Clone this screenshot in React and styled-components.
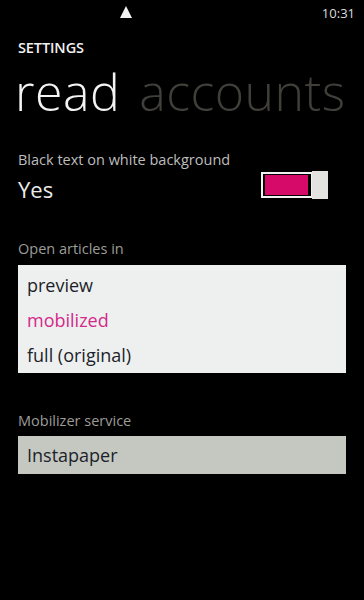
import React from 'react';
import styled, { createGlobalStyle } from 'styled-components';

const Global = createGlobalStyle`
  html, body {
    margin: 0;
    padding: 0;
    background: #000;
  }
  body {
    font-family: "Open Sans", "Noto Sans", sans-serif;
    color: #ececec;
  }
`;

const Phone = styled.div`
  width: 364px;
  height: 600px;
  background: #000;
  overflow: hidden;
  display: flex;
  flex-direction: column;
`;

const StatusBar = styled.div`
  height: 24px;
  display: flex;
  align-items: center;
  justify-content: space-between;
  padding: 0 9px 0 120px;
`;

const Triangle = styled.div`
  width: 0;
  height: 0;
  border-left: 6px solid transparent;
  border-right: 6px solid transparent;
  border-bottom: 12px solid #f2f2f2;
`;

const Clock = styled.span`
  font-size: 13px;
  color: #dcdcdc;
  margin-top: 2px;
`;

const AppTitle = styled.div`
  margin: 13.5px 0 0 18px;
  font-size: 14.5px;
  line-height: 20px;
  font-weight: 600;
  letter-spacing: -0.1px;
  color: #f0f0f0;
`;

const Pivot = styled.div`
  display: flex;
  gap: 19px;
  margin: 6.5px 0 0 15px;
  white-space: nowrap;
`;

const PivotItem = styled.span`
  font-size: 50px;
  line-height: 56px;
  font-weight: 300;
  letter-spacing: 0.5px;
  color: ${p => (p.active ? '#f4f4f4' : '#403f3a')};
`;

const Section = styled.div`
  margin: ${p => p.top}px 18px 0 18px;
  display: flex;
  flex-direction: column;
`;

const Label = styled.div`
  font-size: 14.5px;
  line-height: 20px;
  color: ${p => (p.light ? '#bdbdbd' : '#9c9c98')};
`;

const ToggleRow = styled.div`
  display: flex;
  align-items: center;
  justify-content: space-between;
  margin-top: 5px;
  padding-right: 18px;
`;

const Value = styled.span`
  font-size: 22px;
  line-height: 28px;
  color: #ececec;
`;

const Toggle = styled.div`
  display: flex;
  align-items: center;
  margin-top: -8px;
`;

const Track = styled.div`
  width: 52px;
  height: 26px;
  box-sizing: border-box;
  border: 2px solid #f2f2f2;
  padding: 1px 3px 1px 2px;
  background: #000;
  display: flex;
`;

const Fill = styled.div`
  flex: 1;
  background: #d60a68;
`;

const Thumb = styled.div`
  width: 16px;
  height: 28px;
  background: #e2e2e0;
  margin-left: -1px;
`;

const ListBox = styled.div`
  margin-top: 6px;
  background: #eef0ef;
  padding-top: 3px;
  height: 108px;
  box-sizing: border-box;
`;

const Option = styled.div`
  height: 35px;
  line-height: 34px;
  padding-left: 9px;
  font-size: 18px;
  color: ${p => (p.selected ? '#d3298a' : '#1c1f2a')};
`;

const Picker = styled.div`
  margin-top: 5px;
  height: 38px;
  line-height: 38px;
  background: #c4c8c1;
  padding-left: 9px;
  font-size: 18px;
  color: #1c1f2a;
`;

const options = ['preview', 'mobilized', 'full (original)'];

export default function App() {
  return (
    <Phone>
      <Global />
      <StatusBar>
        <Triangle />
        <Clock>10:31</Clock>
      </StatusBar>
      <AppTitle>SETTINGS</AppTitle>
      <Pivot>
        <PivotItem active>read</PivotItem>
        <PivotItem>accounts</PivotItem>
      </Pivot>

      <Section top={30}>
        <Label light>Black text on white background</Label>
        <ToggleRow>
          <Value>Yes</Value>
          <Toggle>
            <Track><Fill /></Track>
            <Thumb />
          </Toggle>
        </ToggleRow>
      </Section>

      <Section top={36}>
        <Label>Open articles in</Label>
        <ListBox>
          {options.map(o => (
            <Option key={o} selected={o === 'mobilized'}>{o}</Option>
          ))}
        </ListBox>
      </Section>

      <Section top={38}>
        <Label>Mobilizer service</Label>
        <Picker>Instapaper</Picker>
      </Section>
    </Phone>
  );
}
